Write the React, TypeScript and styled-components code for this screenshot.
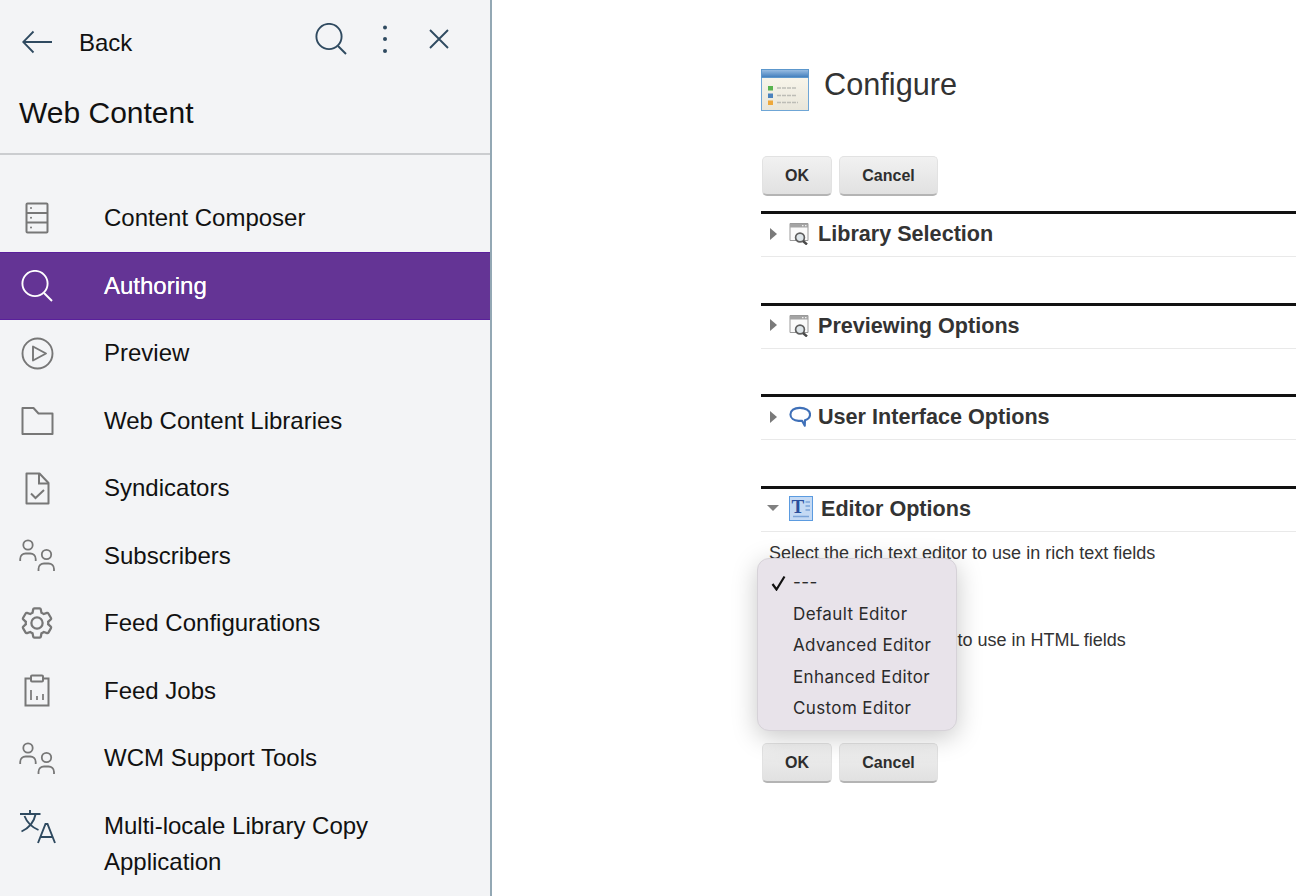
import React from "react";
import styled, { createGlobalStyle } from "styled-components";

const Global = createGlobalStyle`
  html, body { margin: 0; padding: 0; background: #fff; }
  body { font-family: "Liberation Sans", Arial, sans-serif; }
`;

const Page = styled.div`
  position: relative;
  display: flex;
  width: 1296px;
  height: 896px;
  overflow: hidden;
  background: #fff;
`;

const Sidebar = styled.aside`
  box-sizing: border-box;
  flex: 0 0 492px;
  height: 896px;
  background: #f3f4f6;
  border-right: 2px solid #93a8b4;
  overflow: hidden;
`;

const SideHeader = styled.header`
  padding-top: 18px;
  border-bottom: 2px solid #cbcdd0;
  padding-bottom: 20px;
`;

const TopBar = styled.div`
  display: flex;
  align-items: center;
  height: 48px;
  padding: 0 35px 0 22px;
`;

const BackLabel = styled.span`
  margin: 2px 0 0 27px;
  font-size: 24px;
  color: #111;
  flex: 1;
`;

const Actions = styled.div`
  display: flex;
  align-items: center;
  gap: 35px;
  margin-top: -6px;
`;

const SideTitle = styled.h1`
  margin: 27px 0 0 19px;
  font-size: 30px;
  line-height: 40px;
  font-weight: 400;
  color: #111;
`;

const NavList = styled.nav`
  padding-top: 29.5px;
`;

const NavRow = styled.div<{ $active?: boolean; $multi?: boolean }>`
  box-sizing: border-box;
  display: grid;
  grid-template-columns: 74px 1fr;
  column-gap: 30px;
  align-items: ${(p) => (p.$multi ? "start" : "center")};
  height: ${(p) => (p.$multi ? "104px" : "67.5px")};
  padding-top: ${(p) => (p.$multi ? "16px" : "0")};
  font-size: 24px;
  line-height: 36px;
  color: ${(p) => (p.$active ? "#fff" : "#111")};
  background: ${(p) => (p.$active ? "#643495" : "transparent")};
  box-shadow: ${(p) => (p.$active ? "inset 0 1px 0 #5a1f9c, inset 0 -1px 0 #5a1f9c" : "none")};
  text-shadow: ${(p) => (p.$active ? "0 0 .6px #fff" : "none")};
`;

const NavIcon = styled.span<{ $multi?: boolean }>`
  display: flex;
  justify-content: center;
  align-items: center;
  margin-top: ${(p) => (p.$multi ? "2px" : "0")};
`;

const Main = styled.main`
  flex: 1;
  min-width: 0;
  padding: 69px 0 0 269px;
`;

const TitleRow = styled.div`
  display: flex;
  align-items: center;
  gap: 15px;
  height: 42px;
`;

const PageTitle = styled.h2`
  margin: 0 0 10px;
  font-size: 30.7px;
  font-weight: 400;
  color: #333;
`;

const ButtonRow = styled.div<{ $top: string }>`
  display: flex;
  gap: 7px;
  padding-left: 1px;
  margin-top: ${(p) => p.$top};
`;

const Button = styled.button<{ $w: number }>`
  box-sizing: border-box;
  width: ${(p) => p.$w}px;
  height: 40px;
  padding: 1px 0 0;
  border: 1px solid #e2e2e2;
  border-bottom: 2px solid #b4b4b4;
  border-radius: 5px;
  background: linear-gradient(#f1f1f1, #e1e1e1);
  font: 700 16px "Liberation Sans", Arial, sans-serif;
  color: #2e2e2e;
`;

const Sections = styled.div`
  margin-top: 15px;
`;

const Section = styled.section<{ $open?: boolean }>`
  box-sizing: border-box;
  border-top: 3px solid #111;
  height: ${(p) => (p.$open ? "auto" : "91.5px")};
`;

const SectionHeader = styled.div`
  box-sizing: border-box;
  display: flex;
  align-items: center;
  height: 43px;
  padding: 0 0 2px 6px;
  border-bottom: 1px solid #e9e9e9;
`;

const Chevron = styled.span`
  display: flex;
  justify-content: center;
  width: 12px;
  margin-right: 10px;
  margin-top: -1px;
`;

const SectionIcon = styled.span<{ $w?: number }>`
  display: flex;
  width: ${(p) => p.$w ?? 21}px;
  margin-right: 8px;
  & > svg {
    flex: none;
  }
`;

const SectionTitle = styled.h3`
  margin: 0;
  font-size: 21.6px;
  font-weight: 700;
  color: #333;
  white-space: nowrap;
`;

const Field = styled.div`
  height: 87px;
  padding-left: 8px;
  font-size: 18px;
  line-height: 20px;
  color: #333;
  white-space: nowrap;
`;

const Fields = styled.div`
  padding-top: 11px;
`;

const Popup = styled.div`
  position: absolute;
  left: 757px;
  top: 558px;
  box-sizing: border-box;
  width: 200px;
  height: 173px;
  padding: 8px 0 0 0;
  background: #e8e3ea;
  border: 1px solid #d6d2d8;
  border-radius: 12px;
  box-shadow: 0 6px 26px rgba(0, 0, 0, 0.22);
`;

const PopupItem = styled.div`
  position: relative;
  height: 31.5px;
  padding-left: 35px;
  font: 400 17px/31.5px "Inter", "Open Sans", sans-serif;
  letter-spacing: 0.37px;
  color: #2a2a2a;
  white-space: nowrap;
`;

const Check = styled.svg`
  position: absolute;
  left: 13px;
  top: 8px;
`;

type P = { c?: string };

const Arrow = () => (
  <svg width="30" height="24" viewBox="0 0 30 24" fill="none" stroke="#2f4a60" strokeWidth="1.8">
    <path d="M30 12H1.5M11.5 1.5 1.2 12l10.3 10.5" />
  </svg>
);
const Search = ({ c = "#2f4a60" }: P) => (
  <svg width="32" height="32" viewBox="0 0 32 32" fill="none" stroke={c} strokeWidth="1.9">
    <circle cx="14" cy="13.5" r="12.6" />
    <path d="M23 23l8 8" />
  </svg>
);
const Dots = () => (
  <svg width="6" height="30" viewBox="0 0 6 30" fill="#2f4a60">
    <circle cx="3" cy="3.5" r="2" />
    <circle cx="3" cy="15" r="2" />
    <circle cx="3" cy="27" r="2" />
  </svg>
);
const Close = () => (
  <svg width="32" height="32" viewBox="0 0 32 32" fill="none" stroke="#2f4a60" strokeWidth="1.9">
    <path d="M7 7l18 18M25 7 7 25" />
  </svg>
);
const grey = "#777";
const Server = () => (
  <svg width="24" height="32" viewBox="0 0 24 32" fill="none" stroke={grey} strokeWidth="2">
    <rect x="1.5" y="1.5" width="21" height="29" rx="1" />
    <path d="M1.5 11h21M1.5 20.5h21" />
    <g fill={grey} stroke="none">
      <circle cx="6" cy="6" r="1" />
      <circle cx="6" cy="15.7" r="1" />
      <circle cx="6" cy="25.5" r="1" />
    </g>
  </svg>
);
const Play = () => (
  <svg width="33" height="33" viewBox="0 0 33 33" fill="none" stroke={grey} strokeWidth="1.9">
    <circle cx="16.5" cy="16.5" r="15" />
    <path d="M12 9.5v14l13-7z" strokeLinejoin="round" />
  </svg>
);
const Folder = () => (
  <svg width="33" height="30" viewBox="0 0 33 30" fill="none" stroke={grey} strokeWidth="2">
    <path d="M1.5 2h11l5 5.5h14v20.5h-30z" strokeLinejoin="round" />
  </svg>
);
const DocCheck = () => (
  <svg width="25" height="33" viewBox="0 0 25 33" fill="none" stroke={grey} strokeWidth="2">
    <path d="M1.5 1.5h13l9 9.5v20.500h-22z" strokeLinejoin="round" />
    <path d="M14 1.500v10h9.500" />
    <path d="M6 21.500l4.500 4.500 8.500-8" />
  </svg>
);
const Users = () => (
  <svg width="36" height="33" viewBox="0 0 36 33" fill="none" stroke={grey} strokeWidth="1.8">
    <circle cx="9" cy="6" r="4.700" />
    <path d="M1.200 22v-2c0-3.500 2.500-5.500 5.500-5.500h4.500c3 0 5.500 2 5.500 5.500v2" />
    <circle cx="27.500" cy="15.500" r="4.700" />
    <path d="M19.500 32v-2c0-3.500 2.500-5.500 5.500-5.500h4.500c3 0 5.500 2 5.500 5.500v2" />
  </svg>
);
const Gear = () => (
  <svg width="36" height="36" viewBox="0 0 32 32" fill={grey}>
    <path d="M27,16.76c0-.25,0-.5,0-.76s0-.51,0-.77l1.92-1.68A2,2,0,0,0,29.3,11L26.94,7a2,2,0,0,0-1.73-1,2,2,0,0,0-.64.1l-2.43.82a11.35,11.35,0,0,0-1.31-.75l-.51-2.52a2,2,0,0,0-2-1.61H13.64a2,2,0,0,0-2,1.61l-.51,2.52a11.48,11.48,0,0,0-1.32.75L7.43,6.06A2,2,0,0,0,6.79,6,2,2,0,0,0,5.06,7L2.7,11a2,2,0,0,0,.41,2.51L5,15.24c0,.25,0,.5,0,.76s0,.51,0,.77L3.11,18.45A2,2,0,0,0,2.7,21L5.06,25a2,2,0,0,0,1.73,1,2,2,0,0,0,.64-.1l2.43-.82a11.35,11.35,0,0,0,1.31.75l.51,2.52a2,2,0,0,0,2,1.61h4.72a2,2,0,0,0,2-1.61l.51-2.52a11.48,11.48,0,0,0,1.32-.75l2.42.82a2,2,0,0,0,.64.1,2,2,0,0,0,1.73-1L29.3,21a2,2,0,0,0-.41-2.51ZM25.21,24l-3.43-1.16a8.86,8.86,0,0,1-2.71,1.57L18.36,28H13.64l-.71-3.55a9.36,9.36,0,0,1-2.7-1.57L6.79,24,4.43,20l2.72-2.4a8.9,8.9,0,0,1,0-3.13L4.43,12,6.79,8l3.43,1.16a8.86,8.86,0,0,1,2.71-1.57L13.64,4h4.720l.71,3.55a9.36,9.36,0,0,1,2.7,1.57L25.21,8,27.57,12l-2.72,2.4a8.9,8.9,0,0,1,0,3.13L27.57,20Z" />
    <path d="M16,22a6,6,0,1,1,6-6A5.94,5.94,0,0,1,16,22Zm0-10a3.91,3.91,0,0,0-4,4,3.91,3.91,0,0,0,4,4,3.91,3.91,0,0,0,4-4A3.91,3.91,0,0,0,16,12Z" />
  </svg>
);
const Clipboard = () => (
  <svg width="26" height="33" viewBox="0 0 26 33" fill="none" stroke={grey} strokeWidth="2">
    <path d="M7 4.500H1.500v27h23v-27H19" />
    <rect x="7" y="1.500" width="12" height="6" rx="1" />
    <path d="M7 16v10M13 22v4M19 20v6" strokeWidth="1.700" />
  </svg>
);
const Translate = () => (
  <svg width="37" height="34" viewBox="0 0 37 34" fill="none" stroke="#2f4a60" strokeWidth="1.900">
    <path d="M1 4h20.500M11 0v4" />
    <path d="M16.500 4.500C15 12 10 18 2.500 21.500M5.500 6c2.500 6.500 7 11 14 14" />
    <path d="M19 33l7.500-19h2l7.500 19M21.500 27h12" />
  </svg>
);

const Triangle = ({ open }: { open?: boolean }) =>
  open ? (
    <svg width="12" height="6" viewBox="0 0 12 6" fill="#808080">
      <path d="M0 0h12L6 6z" />
    </svg>
  ) : (
    <svg width="7" height="12" viewBox="0 0 7 12" fill="#7a7a7a">
      <path d="M0 0l7 6-7 6z" />
    </svg>
  );

const ConfigureIcon = () => (
  <svg width="48" height="42" viewBox="0 0 48 42">
    <defs>
      <linearGradient id="cfgBar" x1="0" y1="0" x2="0" y2="1">
        <stop offset="0" stopColor="#9cc0e4" />
        <stop offset="1" stopColor="#3f7cbb" />
      </linearGradient>
      <linearGradient id="cfgBody" x1="0" y1="0" x2="0" y2="1">
        <stop offset="0" stopColor="#fbf8ee" />
        <stop offset="1" stopColor="#e9e6da" />
      </linearGradient>
    </defs>
    <rect x=".5" y=".5" width="47" height="41" fill="url(#cfgBody)" stroke="#6fa6d6" />
    <rect x=".5" y=".5" width="47" height="8" fill="url(#cfgBar)" stroke="#5c97cc" />
    <rect x="7" y="17" width="5" height="4.500" fill="#58b44e" />
    <rect x="7" y="24.500" width="5" height="4.500" fill="#4b82bd" />
    <rect x="7" y="31.500" width="5" height="4.500" fill="#eea83a" />
    <path d="M16 19h20M16 26.500h19M16 33.500h21" stroke="#bdbdb6" strokeWidth="1.600" strokeDasharray="4 1" />
  </svg>
);

const WindowSearchIcon = () => (
  <svg width="21" height="22" viewBox="0 0 21 22" fill="none">
    <path d="M1 .5h18v17H1z" fill="#fafafa" stroke="#9a9a9a" />
    <rect x="1" y="1" width="18" height="3.500" fill="#a4a4a4" />
    <path d="M13 2.700h1.500M16 2.700h1.500" stroke="#eee" strokeWidth="1.200" />
    <circle cx="11" cy="14.500" r="4.400" fill="#dfe6ea" stroke="#5f5f5f" strokeWidth="1.700" />
    <path d="M14 18l4 3.500" stroke="#4a4a4a" strokeWidth="2.400" />
  </svg>
);

const BubbleIcon = () => (
  <svg width="22" height="22" viewBox="0 0 23 23" fill="none">
    <path
      d="M11 2C5.500 2 1.500 4.800 1.500 8.800c0 3.800 3.600 6.400 8.500 6.700 1.500.1 3 .1 3.800.1l2.700 5 .2-5.800c3.300-1 5.300-3.300 5.300-6 0-4-5-6.800-10.500-6.800z"
      fill="#fff"
      stroke="#3f70b8"
      strokeWidth="2.200"
      strokeLinejoin="round"
    />
  </svg>
);

const EditorIcon = () => (
  <svg width="24" height="25" viewBox="0 0 24 25">
    <rect x=".5" y=".5" width="23" height="24" fill="#c5daf4" stroke="#5b9be0" />
    <text x="2.500" y="17" fontFamily="'Liberation Serif', serif" fontWeight="700" fontSize="19" fill="#2a4f9c">
      T
    </text>
    <path d="M16.500 6h4.500M16.500 10h4.500M16.500 14h4.500M4 20.500h16" stroke="#7ba4d8" strokeWidth="1.400" />
  </svg>
);

const rows: { label: React.ReactNode; icon: React.ReactNode; active?: boolean; multi?: boolean }[] = [
  { label: "Content Composer", icon: <Server /> },
  { label: "Authoring", icon: <Search c="#fff" />, active: true },
  { label: "Preview", icon: <Play /> },
  { label: "Web Content Libraries", icon: <Folder /> },
  { label: "Syndicators", icon: <DocCheck /> },
  { label: "Subscribers", icon: <Users /> },
  { label: "Feed Configurations", icon: <Gear /> },
  { label: "Feed Jobs", icon: <Clipboard /> },
  { label: "WCM Support Tools", icon: <Users /> },
  { label: "Multi-locale Library Copy Application", icon: <Translate />, multi: true },
];

const sections = [
  { title: "Library Selection", icon: <WindowSearchIcon /> },
  { title: "Previewing Options", icon: <WindowSearchIcon /> },
  { title: "User Interface Options", icon: <BubbleIcon /> },
];

const menu = ["---", "Default Editor", "Advanced Editor", "Enhanced Editor", "Custom Editor"];

export default function App() {
  return (
    <Page>
      <Global />
      <Sidebar>
        <SideHeader>
          <TopBar>
            <Arrow />
            <BackLabel>Back</BackLabel>
            <Actions>
              <Search />
              <Dots />
              <Close />
            </Actions>
          </TopBar>
          <SideTitle>Web Content</SideTitle>
        </SideHeader>
        <NavList>
          {rows.map((r, i) => (
            <NavRow key={i} $active={r.active} $multi={r.multi}>
              <NavIcon $multi={r.multi}>{r.icon}</NavIcon>
              <span>{r.label}</span>
            </NavRow>
          ))}
        </NavList>
      </Sidebar>
      <Main>
        <TitleRow>
          <ConfigureIcon />
          <PageTitle>Configure</PageTitle>
        </TitleRow>
        <ButtonRow $top="45px">
          <Button $w={70}>OK</Button>
          <Button $w={99}>Cancel</Button>
        </ButtonRow>
        <Sections>
          {sections.map((s) => (
            <Section key={s.title}>
              <SectionHeader>
                <Chevron>
                  <Triangle />
                </Chevron>
                <SectionIcon>{s.icon}</SectionIcon>
                <SectionTitle>{s.title}</SectionTitle>
              </SectionHeader>
            </Section>
          ))}
          <Section $open>
            <SectionHeader>
              <Chevron>
                <Triangle open />
              </Chevron>
              <SectionIcon $w={24}>
                <EditorIcon />
              </SectionIcon>
              <SectionTitle>Editor Options</SectionTitle>
            </SectionHeader>
            <Fields>
              <Field>Select the rich text editor to use in rich text fields</Field>
              <Field>Select the HTML editor to use in HTML fields</Field>
            </Fields>
          </Section>
        </Sections>
        <ButtonRow $top="26px">
          <Button $w={70}>OK</Button>
          <Button $w={99}>Cancel</Button>
        </ButtonRow>
      </Main>
      <Popup>
        {menu.map((m, i) => (
          <PopupItem key={m}>
            {i === 0 && (
              <Check width="15" height="16" viewBox="0 0 15 16" fill="none" stroke="#111" strokeWidth="2.200">
                <path d="M1.500 9l4 5.500L13.500 1.500" />
              </Check>
            )}
            {m}
          </PopupItem>
        ))}
      </Popup>
    </Page>
  );
}
